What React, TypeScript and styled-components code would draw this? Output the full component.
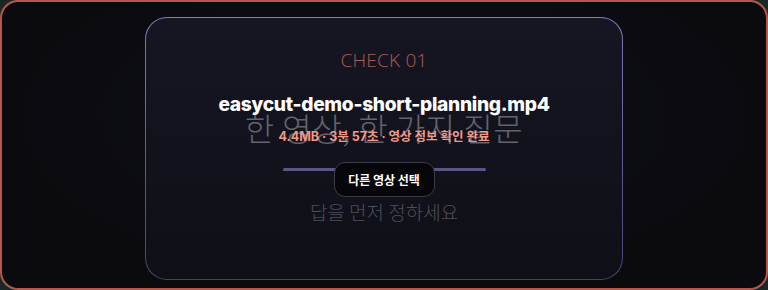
import React from "react";
import styled, { createGlobalStyle } from "styled-components";

const Global = createGlobalStyle`
  html, body { margin: 0; padding: 0; background: #1b2726; }
  body { width: 768px; height: 290px; overflow: hidden; }
  * { box-sizing: border-box; }
`;

const Frame = styled.div`
  width: 768px;
  height: 290px;
  border: 2px solid #b3584b;
  border-radius: 18px;
  background: radial-gradient(ellipse at 50% 40%, #10111a 0%, #0a0a0f 70%);
  display: flex;
  justify-content: center;
  padding-top: 15px;
`;

const Card = styled.div`
  position: relative;
  width: 478px;
  height: 263px;
  border-radius: 22px;
  border: 1.5px solid transparent;
  background:
    linear-gradient(180deg, #161623 0%, #12121c 60%, #0f0f17 100%) padding-box,
    linear-gradient(180deg, #807bbd 0%, #625e98 50%, #46436e 100%) border-box;
  display: flex;
  flex-direction: column;
  align-items: center;
  padding-top: 30px;
  font-family: "Noto Sans CJK KR", "Noto Sans", sans-serif;
`;

const Eyebrow = styled.div`
  font-family: "Open Sans", "Noto Sans", sans-serif;
  font-weight: 300;
  font-size: 19px;
  line-height: 24px;
  color: #a95c56;
  letter-spacing: 0.2px;
`;

const Heading = styled.div`
  margin-top: 35px;
  font-weight: 300;
  font-size: 32px;
  line-height: 40px;
  color: #62636c;
  letter-spacing: 0.5px;
`;

const Bar = styled.div`
  margin-top: 21px;
  width: 203px;
  height: 3px;
  border-radius: 2px;
  background: #5a5786;
`;

const Sub = styled.div`
  margin-top: 27px;
  font-weight: 300;
  font-size: 19px;
  line-height: 28px;
  color: #4d4e58;
`;

const Overlay = styled.div`
  position: absolute;
  left: 0;
  right: 0;
  top: 74px;
  display: flex;
  flex-direction: column;
  align-items: center;
`;

const FileName = styled.div`
  font-family: Inter, "Noto Sans", sans-serif;
  font-weight: 800;
  font-size: 19.2px;
  line-height: 24px;
  color: #ffffff;
  letter-spacing: -0.3px;
`;

const Meta = styled.div`
  margin-top: 13px;
  font-family: Inter, "Noto Sans CJK KR", sans-serif;
  font-weight: 700;
  font-size: 12.5px;
  line-height: 16px;
  color: #f29a88;
`;

const Button = styled.button`
  margin-top: 17px;
  width: 101px;
  height: 35px;
  border-radius: 11px;
  border: 1px solid #3c3c47;
  background: #07070b;
  color: #ffffff;
  font-family: "Noto Sans CJK KR", sans-serif;
  font-weight: 700;
  font-size: 12px;
  cursor: pointer;
`;

export default function App() {
  return (
    <>
      <Global />
      <Frame>
        <Card>
          <Eyebrow>CHECK 01</Eyebrow>
          <Heading>한 영상, 한 가지 질문</Heading>
          <Bar />
          <Sub>답을 먼저 정하세요</Sub>
          <Overlay>
            <FileName>easycut-demo-short-planning.mp4</FileName>
            <Meta>4.4MB · 3분 57초 · 영상 정보 확인 완료</Meta>
            <Button>다른 영상 선택</Button>
          </Overlay>
        </Card>
      </Frame>
    </>
  );
}
